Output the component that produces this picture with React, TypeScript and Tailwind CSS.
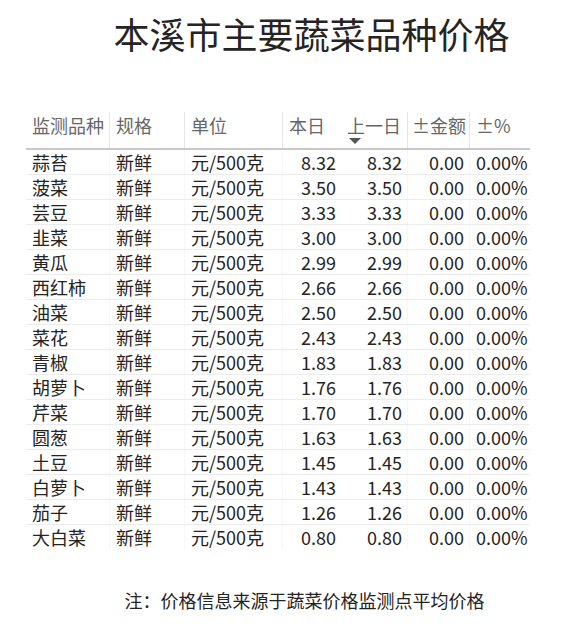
const rows: [string, string, string][] = [
  ['蒜苔', '8.32', '8.32'],
  ['菠菜', '3.50', '3.50'],
  ['芸豆', '3.33', '3.33'],
  ['韭菜', '3.00', '3.00'],
  ['黄瓜', '2.99', '2.99'],
  ['西红柿', '2.66', '2.66'],
  ['油菜', '2.50', '2.50'],
  ['菜花', '2.43', '2.43'],
  ['青椒', '1.83', '1.83'],
  ['胡萝卜', '1.76', '1.76'],
  ['芹菜', '1.70', '1.70'],
  ['圆葱', '1.63', '1.63'],
  ['土豆', '1.45', '1.45'],
  ['白萝卜', '1.43', '1.43'],
  ['茄子', '1.26', '1.26'],
  ['大白菜', '0.80', '0.80'],
]

const cols = 'grid grid-cols-[84px_75px_98px_59px_66px_62px_60px]'

export default function App() {
  return (
    <div className="h-[628px] w-[585px] bg-white font-['Segoe_UI','Noto_Sans_CJK_SC',sans-serif] text-[#252423]">
      <h1 className="pl-[38px] pt-[11px] text-center text-[36px] leading-[44px] font-normal">
        本溪市主要蔬菜品种价格
      </h1>

      <div className="ml-[26px] mt-[57px] w-[504px] text-[18px]">
        <div className={`${cols} h-[38px] border-b-2 border-[#c8c8c8] text-[#666666]`}>
          <div className="border-r border-[#e6e6e6] pl-[6px] pt-[1px] leading-[24px]">监测品种</div>
          <div className="border-r border-[#e6e6e6] pl-[6px] pt-[1px] leading-[24px]">规格</div>
          <div className="border-r border-[#e6e6e6] pl-[6px] pt-[1px] leading-[24px]">单位</div>
          <div className="pl-[6px] pt-[1px] leading-[24px]">本日</div>
          <div className="flex flex-col border-r border-[#e6e6e6] pl-[5px] pt-[1px] leading-[24px]">
            <span>上一日</span>
            <span className="ml-[2px] mt-[1px] h-0 w-0 border-x-[6px] border-t-[6px] border-x-transparent border-t-[#555555]" />
          </div>
          <div className="border-r border-[#e6e6e6] pl-[4px] pt-[1px] leading-[24px]">±金额</div>
          <div className="pl-[6px] pt-[1px] leading-[24px]">±%</div>
        </div>

        {rows.map(([name, today, prev], i) => (
          <div
            key={name}
            className={`${cols} h-[25px] leading-[24px] ${i < rows.length - 1 ? 'border-b border-[#ececec]' : ''}`}
          >
            <div className="border-r border-[#f7f7f7] pl-[6px]">{name}</div>
            <div className="border-r border-[#f7f7f7] pl-[6px]">新鲜</div>
            <div className="border-r border-[#f7f7f7] pl-[6px]">元/500克</div>
            <div className="pr-[6px] text-right">{today}</div>
            <div className="border-r border-[#f7f7f7] pr-[5px] text-right">{prev}</div>
            <div className="border-r border-[#f7f7f7] pr-[5px] text-right">0.00</div>
            <div className="pl-[6px]">0.00%</div>
          </div>
        ))}
      </div>

      <p className="mt-[38px] pl-[24px] text-center text-[18px] leading-[24px]">
        注：价格信息来源于蔬菜价格监测点平均价格
      </p>
    </div>
  )
}
